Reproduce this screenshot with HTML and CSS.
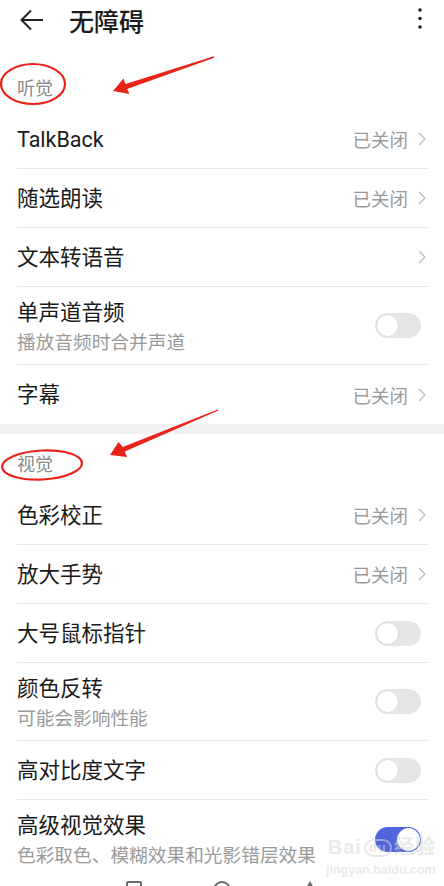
FILE: index.html
```html
<!DOCTYPE html>
<html lang="zh-CN">
<head>
    <meta charset="UTF-8">
    <meta name="viewport" content="width=device-width, initial-scale=1.0">
    <title>无障碍</title>
    <link rel="stylesheet" href="styles.css">
</head>
<body>
<div class="screen">
    <header class="toolbar">
        <svg class="back" width="24" height="22" viewBox="0 0 24 22">
            <path d="M23 11 H2 M11 1.5 L1.5 11 L11 20.5" fill="none" stroke="#222" stroke-width="2"/>
        </svg>
        <h1 class="title">无障碍</h1>
        <svg class="more" width="4" height="22" viewBox="0 0 4 22">
            <circle cx="2" cy="2" r="1.8" fill="#222"/>
            <circle cx="2" cy="10.5" r="1.8" fill="#222"/>
            <circle cx="2" cy="19" r="1.8" fill="#222"/>
        </svg>
    </header>

    <section class="group">
        <div class="group-title">听觉</div>
        <div class="row">
            <div class="row-text"><div class="row-title">TalkBack</div></div>
            <span class="row-value">已关闭</span>
            <svg class="chevron" width="8" height="14" viewBox="0 0 8 14"><path d="M1 1 L7 7 L1 13" fill="none" stroke="#bcbcbc" stroke-width="1.3"/></svg>
        </div>
        <div class="row">
            <div class="row-text"><div class="row-title">随选朗读</div></div>
            <span class="row-value">已关闭</span>
            <svg class="chevron" width="8" height="14" viewBox="0 0 8 14"><path d="M1 1 L7 7 L1 13" fill="none" stroke="#bcbcbc" stroke-width="1.3"/></svg>
        </div>
        <div class="row">
            <div class="row-text"><div class="row-title">文本转语音</div></div>
            <svg class="chevron" width="8" height="14" viewBox="0 0 8 14"><path d="M1 1 L7 7 L1 13" fill="none" stroke="#bcbcbc" stroke-width="1.3"/></svg>
        </div>
        <div class="row row-double">
            <div class="row-text">
                <div class="row-title">单声道音频</div>
                <div class="row-sub">播放音频时合并声道</div>
            </div>
            <span class="switch"></span>
        </div>
        <div class="row row-last">
            <div class="row-text"><div class="row-title">字幕</div></div>
            <span class="row-value">已关闭</span>
            <svg class="chevron" width="8" height="14" viewBox="0 0 8 14"><path d="M1 1 L7 7 L1 13" fill="none" stroke="#bcbcbc" stroke-width="1.3"/></svg>
        </div>
    </section>

    <div class="gap"></div>

    <section class="group">
        <div class="group-title">视觉</div>
        <div class="row">
            <div class="row-text"><div class="row-title">色彩校正</div></div>
            <span class="row-value">已关闭</span>
            <svg class="chevron" width="8" height="14" viewBox="0 0 8 14"><path d="M1 1 L7 7 L1 13" fill="none" stroke="#bcbcbc" stroke-width="1.3"/></svg>
        </div>
        <div class="row">
            <div class="row-text"><div class="row-title">放大手势</div></div>
            <span class="row-value">已关闭</span>
            <svg class="chevron" width="8" height="14" viewBox="0 0 8 14"><path d="M1 1 L7 7 L1 13" fill="none" stroke="#bcbcbc" stroke-width="1.3"/></svg>
        </div>
        <div class="row">
            <div class="row-text"><div class="row-title">大号鼠标指针</div></div>
            <span class="switch"></span>
        </div>
        <div class="row row-double">
            <div class="row-text">
                <div class="row-title">颜色反转</div>
                <div class="row-sub">可能会影响性能</div>
            </div>
            <span class="switch"></span>
        </div>
        <div class="row">
            <div class="row-text"><div class="row-title">高对比度文字</div></div>
            <span class="switch"></span>
        </div>
        <div class="row row-double row-last">
            <div class="row-text">
                <div class="row-title">高级视觉效果</div>
                <div class="row-sub">色彩取色、模糊效果和光影错层效果</div>
            </div>
            <span class="switch switch-on"></span>
        </div>
    </section>

    <nav class="navbar">
        <span class="nav-back"></span>
        <span class="nav-home"></span>
        <span class="nav-recent"></span>
    </nav>

    <!-- red hand-drawn marks on the screenshot -->
    <svg class="marks" width="444" height="886" viewBox="0 0 444 886">
        <ellipse cx="33" cy="84" rx="32" ry="20" fill="none" stroke="#e8231a" stroke-width="2.2"/>
        <polygon points="213.8,56.3 214.2,57.7 127.1,88.9 129.5,94 113,91 123.5,78.5 125.5,84.1" fill="#e8231a"/>
        <ellipse cx="42" cy="465" rx="40" ry="14.5" transform="rotate(-3 42 465)" fill="none" stroke="#e8231a" stroke-width="2.2"/>
        <polygon points="217.7,409.4 218.3,410.6 124.8,451.5 127,457 110,455 118.5,442 122.8,446.9" fill="#e8231a"/>
    </svg>

    <div class="watermark">
        <div class="wm-main">Bai<span class="wm-du">du</span>经验</div>
        <div class="wm-url">jingyan.baidu.com</div>
    </div>
</div>
</body>
</html>
```

FILE: styles.css
```css
body {
    margin: 0;
    background-color: #ffffff;
    font-family: Roboto, "Noto Sans CJK SC", "Noto Sans", sans-serif;
}

.screen {
    position: relative;
    width: 444px;
    height: 886px;
    overflow: hidden;
    background-color: #ffffff;
}

/* top bar */
.toolbar {
    height: 58px;
    display: flex;
    align-items: flex-start;
    padding: 9px 22px 0 20px;
    box-sizing: border-box;
}

.title {
    margin: -5px 0 0 25px;
    font-size: 25px;
    font-weight: 500;
    line-height: 32px;
    color: #1c1c1c;
    font-family: "Noto Sans CJK SC", sans-serif;
    flex: 1;
}

.more {
    margin-top: -1px;
}

/* groups */
.group-title {
    padding: 18px 17px 12px;
    font-size: 18px;
    line-height: 22px;
    color: #8a8a8a;
    font-family: "Noto Sans CJK SC", sans-serif;
}

.gap {
    height: 10px;
    background-color: #f1f1f1;
}

.row {
    height: 58px;
    margin: 0 16px 0 17px;
    padding-right: 2px;
    display: flex;
    align-items: center;
    border-bottom: 1px solid #e9e9e9;
}

.row-double {
    height: 77px;
}

.row-last {
    border-bottom: none;
    height: 59px;
}

.row-double.row-last {
    height: 78px;
}

.row-text {
    flex: 1;
}

.row-title {
    font-size: 21.5px;
    line-height: 27px;
    color: #1a1a1a;
}

.row-sub {
    font-size: 18.7px;
    line-height: 25px;
    margin-top: 2px;
    color: #9a9a9a;
    font-family: "Noto Sans CJK SC", sans-serif;
}

.row-value {
    font-size: 18.5px;
    color: #9b9b9b;
    margin-right: 10px;
    font-family: "Noto Sans CJK SC", sans-serif;
}

/* switches */
.switch {
    position: relative;
    width: 46px;
    height: 25px;
    margin-right: 5px;
    border-radius: 13px;
    background-color: #e6e6e6;
}

.switch::after {
    content: "";
    position: absolute;
    left: 1px;
    top: 1px;
    width: 21px;
    height: 21px;
    border-radius: 50%;
    background-color: #ffffff;
    border: 1px solid #d8d8d8;
}

.switch-on {
    background-color: #5166dc;
}

.switch-on::after {
    left: auto;
    right: 1px;
    border-color: #ffffff;
}

/* system navigation, mostly cut off */
.navbar {
    display: flex;
    justify-content: space-around;
    padding: 3px 90px 0;
}

.nav-back {
    width: 12px;
    height: 12px;
    border: 2px solid #6a6a6a;
    border-radius: 2px;
}

.nav-home {
    width: 14px;
    height: 14px;
    border: 2px solid #6a6a6a;
    border-radius: 50%;
}

.nav-recent {
    width: 0;
    height: 0;
    border-left: 8px solid transparent;
    border-right: 8px solid transparent;
    border-bottom: 14px solid #6a6a6a;
}

/* overlays */
.marks {
    position: absolute;
    left: 0;
    top: 0;
    pointer-events: none;
}

.watermark {
    position: absolute;
    left: 326px;
    top: 836px;
    color: rgba(215, 215, 215, 0.55);
    font-family: "Liberation Sans", sans-serif;
    text-align: right;
}

.wm-main {
    font-size: 20px;
    font-weight: bold;
    line-height: 22px;
    letter-spacing: 1px;
}

.wm-du {
    display: inline-block;
    font-size: 13px;
    border: 2px solid rgba(215, 215, 215, 0.55);
    border-radius: 10px;
    padding: 0 3px;
    line-height: 14px;
    margin: 0 2px;
    vertical-align: 2px;
}

.wm-url {
    font-size: 12.5px;
    font-weight: bold;
    line-height: 14px;
    margin-top: 5px;
}
```
